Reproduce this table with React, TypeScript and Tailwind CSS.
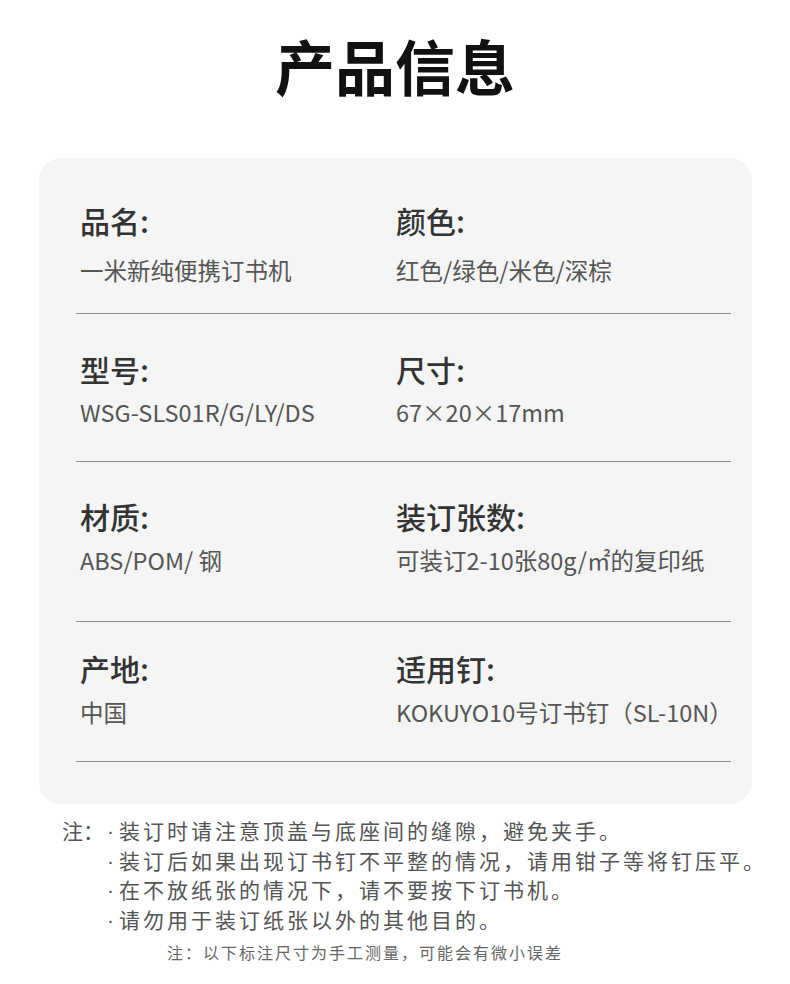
import React from "react";

type Item = { label: string; value: string };

const rows: {
  left: Item;
  right: Item;
  pad: string;
  gap: string;
}[] = [
  {
    left: { label: "品名:", value: "一米新纯便携订书机" },
    right: { label: "颜色:", value: "红色/绿色/米色/深棕" },
    pad: "pt-[47px] pb-[31px]",
    gap: "mt-[24px]",
  },
  {
    left: { label: "型号:", value: "WSG-SLS01R/G/LY/DS" },
    right: { label: "尺寸:", value: "67×20×17mm" },
    pad: "pt-[40px] pb-[37px]",
    gap: "mt-[17px]",
  },
  {
    left: { label: "材质:", value: "ABS/POM/ 钢" },
    right: { label: "装订张数:", value: "可装订2-10张80g/㎡的复印纸" },
    pad: "pt-[39px] pb-[49px]",
    gap: "mt-[18px]",
  },
  {
    left: { label: "产地:", value: "中国" },
    right: { label: "适用钉:", value: "KOKUYO10号订书钉（SL-10N）" },
    pad: "pt-[31px] pb-[37px]",
    gap: "mt-[18px]",
  },
];

const notes = [
  "装订时请注意顶盖与底座间的缝隙，避免夹手。",
  "装订后如果出现订书钉不平整的情况，请用钳子等将钉压平。",
  "在不放纸张的情况下，请不要按下订书机。",
  "请勿用于装订纸张以外的其他目的。",
];

function Cell({ item, gap }: { item: Item; gap: string }) {
  return (
    <div>
      <div className="text-[30px] font-medium leading-[30px] text-[#333]">{item.label}</div>
      <div className={`${gap} text-[23.5px] leading-[23px] text-[#555] whitespace-nowrap`}>
        {item.value}
      </div>
    </div>
  );
}

export default function App() {
  return (
    <div
      className="w-[790px] h-[984px] overflow-hidden bg-white"
      style={{ fontFamily: '"Noto Sans CJK SC", "Noto Sans", sans-serif' }}
    >
      <h1 className="pt-[35px] text-center text-[60px] font-bold leading-[60px] text-[#111]">
        产品信息
      </h1>

      <div className="ml-[39px] mt-[63px] w-[713px] rounded-[22px] bg-[#f5f5f5] pl-[37px] pr-[21px] pb-[42px]">
        {rows.map((row, i) => (
          <div
            key={i}
            className={`grid grid-cols-[316px_1fr] border-b border-[#8c8c8c] pl-[4px] ${row.pad}`}
          >
            <Cell item={row.left} gap={row.gap} />
            <Cell item={row.right} gap={row.gap} />
          </div>
        ))}
      </div>

      <div className="mt-[12px] flex pl-[62px] text-[21px] leading-[29.5px] tracking-[3px] text-[#555]">
        <span className="w-[45px] shrink-0 whitespace-nowrap tracking-normal">注：</span>
        <div>
          {notes.map((n) => (
            <div key={n} className="flex items-center whitespace-nowrap">
              <span
                className="mr-[5px] tracking-normal"
                style={{ fontFamily: '"Liberation Sans", sans-serif' }}
              >
                ·
              </span>
              <span>{n}</span>
            </div>
          ))}
        </div>
      </div>

      <div className="mt-[6px] pl-[167px] text-[16px] leading-[24px] tracking-[2px] text-[#666]">
        注：以下标注尺寸为手工测量，可能会有微小误差
      </div>
    </div>
  );
}
